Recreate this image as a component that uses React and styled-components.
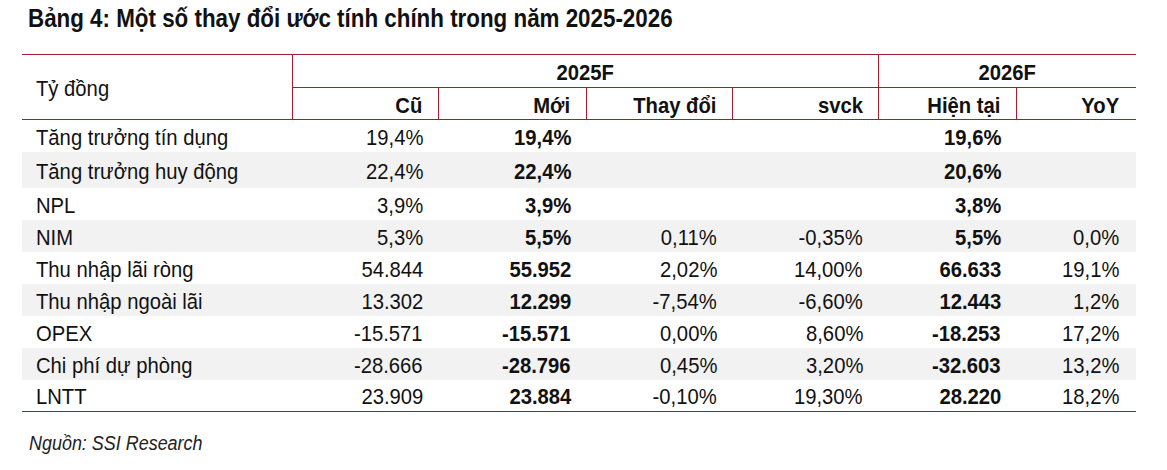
import React from "react";
import styled, { createGlobalStyle } from "styled-components";

const GlobalStyle = createGlobalStyle`
  body {
    margin: 0;
    background: #ffffff;
    font-family: "Liberation Sans", Arial, sans-serif;
    color: #111111;
  }
`;

const LINE = "#a11d2f";

const Page = styled.div`
  width: 1167px;
  height: 470px;
  padding: 3px 0 0 22px;
  box-sizing: border-box;
`;

// the report font is a narrow grotesque: squeeze Liberation Sans to its widths
const Narrow = styled.span`
  display: inline-block;
  white-space: nowrap;
  transform: scaleX(${(p) => p.$sx || 0.92});
  transform-origin: ${(p) => p.$origin || "right"} center;
`;

const Title = styled.h1`
  margin: 0 0 21px 6px;
  font-size: 26px;
  line-height: 30px;
  font-weight: bold;
  color: #111;
`;

const Table = styled.table`
  width: 1114px;
  table-layout: fixed;
  border-collapse: collapse;
  font-size: 22px;
  line-height: 22px;
`;

const HeadCell = styled.th`
  height: ${(p) => (p.$top ? "28px" : "27px")};
  padding: 4px ${(p) => p.$pr ?? 15}px 0 ${(p) => (p.$label ? 14 : 0)}px;
  text-align: ${(p) => (p.$label ? "left" : p.$center ? "center" : "right")};
  font-weight: ${(p) => (p.$label ? "normal" : "bold")};
  border-top: 1px solid ${LINE};
  border-bottom: 1px solid ${LINE};
  border-left: ${(p) => (p.$first ? "none" : `1px solid ${LINE}`)};
  border-right: ${(p) => (p.$last ? "none" : `1px solid ${LINE}`)};
  vertical-align: middle;
  white-space: nowrap;
`;

const Row = styled.tr`
  background: ${(p) => (p.$shaded ? "#f2f2f2" : "transparent")};
  &:last-child td {
    border-bottom: 1px solid ${LINE};
  }
`;

const Cell = styled.td`
  height: ${(p) => p.$h}px;
  box-sizing: border-box;
  padding: 4px ${(p) => p.$pr}px 0 ${(p) => (p.$label ? 14 : 0)}px;
  text-align: ${(p) => (p.$label ? "left" : "right")};
  font-weight: ${(p) => (p.$bold ? "bold" : "normal")};
  vertical-align: middle;
  white-space: nowrap;
`;

const Source = styled.div`
  margin: 20px 0 0 7px;
  font-size: 19.5px;
  line-height: 22px;
  font-style: italic;
  color: #222;
`;

const widths = [270, 146, 148, 146, 146, 138, 120];

const rows = [
  ["Tăng trưởng tín dụng", "19,4%", "19,4%", "", "", "19,6%", ""],
  ["Tăng trưởng huy động", "22,4%", "22,4%", "", "", "20,6%", ""],
  ["NPL", "3,9%", "3,9%", "", "", "3,8%", ""],
  ["NIM", "5,3%", "5,5%", "0,11%", "-0,35%", "5,5%", "0,0%"],
  ["Thu nhập lãi ròng", "54.844", "55.952", "2,02%", "14,00%", "66.633", "19,1%"],
  ["Thu nhập ngoài lãi", "13.302", "12.299", "-7,54%", "-6,60%", "12.443", "1,2%"],
  ["OPEX", "-15.571", "-15.571", "0,00%", "8,60%", "-18.253", "17,2%"],
  ["Chi phí dự phòng", "-28.666", "-28.796", "0,45%", "3,20%", "-32.603", "13,2%"],
  ["LNTT", "23.909", "23.884", "-0,10%", "19,30%", "28.220", "18,2%"],
];

const subHeads = ["Cũ", "Mới", "Thay đổi", "svck", "Hiện tại", "YoY"];

export default function App() {
  return (
    <>
      <GlobalStyle />
      <Page>
        <Title>
          <Narrow $sx={0.86} $origin="left">
            Bảng 4: Một số thay đổi ước tính chính trong năm 2025-2026
          </Narrow>
        </Title>
        <Table>
          <colgroup>
            {widths.map((w, i) => (
              <col key={i} style={{ width: w }} />
            ))}
          </colgroup>
          <thead>
            <tr>
              <HeadCell rowSpan={2} $label $first>
                <Narrow $origin="left">Tỷ đồng</Narrow>
              </HeadCell>
              <HeadCell colSpan={4} $center $top $pr={0}>
                <Narrow $origin="center">2025F</Narrow>
              </HeadCell>
              <HeadCell colSpan={2} $center $top $last $pr={0}>
                <Narrow $origin="center">2026F</Narrow>
              </HeadCell>
            </tr>
            <tr>
              {subHeads.map((h, i) => (
                <HeadCell key={h} $last={i === 5} $pr={i === 5 ? 17 : 15}>
                  <Narrow>{h}</Narrow>
                </HeadCell>
              ))}
            </tr>
          </thead>
          <tbody>
            {rows.map((r, ri) => (
              <Row key={r[0]} $shaded={ri % 2 === 1}>
                {r.map((v, ci) => (
                  <Cell
                    key={ci}
                    $h={ri === 1 ? 36 : 32}
                    $label={ci === 0}
                    $bold={ci === 2 || ci === 5}
                    $pr={ci === 6 ? 17 : 15}
                  >
                    <Narrow $origin={ci === 0 ? "left" : "right"}>{v}</Narrow>
                  </Cell>
                ))}
              </Row>
            ))}
          </tbody>
        </Table>
        <Source>
          <Narrow $origin="left">Nguồn: SSI Research</Narrow>
        </Source>
      </Page>
    </>
  );
}
